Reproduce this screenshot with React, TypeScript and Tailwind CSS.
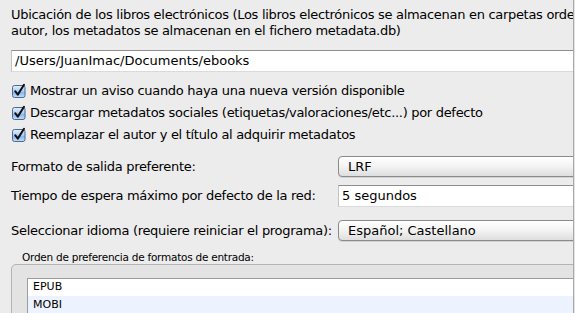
const font = { fontFamily: '"DejaVu Sans", "Liberation Sans", sans-serif' };

function CheckBox() {
  return (
    <svg width="16" height="16" viewBox="0 0 16 16" className="shrink-0">
      <defs>
        <linearGradient id="cbFill" x1="0" y1="0" x2="0" y2="1">
          <stop offset="0" stopColor="#e4effd" />
          <stop offset="0.5" stopColor="#a9cbf3" />
          <stop offset="0.55" stopColor="#86b4ec" />
          <stop offset="1" stopColor="#bfe0ff" />
        </linearGradient>
      </defs>
      <rect x="1.5" y="2.5" width="12.5" height="12" rx="2" fill="url(#cbFill)" stroke="#4f6890" />
      <path d="M4.2 8.2 L6.8 11.6 L13 1.8" fill="none" stroke="#111" strokeWidth="2" strokeLinecap="round" strokeLinejoin="round" />
    </svg>
  );
}

function CheckRow({ label }: { label: string }) {
  return (
    <div className="flex h-[22px] items-center gap-[3px] whitespace-nowrap tracking-[-0.3px]">
      <CheckBox />
      <span>{label}</span>
    </div>
  );
}

function PopUp({ value }: { value: string }) {
  return (
    <div className="flex h-[21px] w-[260px] shrink-0 items-center rounded-[4px] border border-[#8a8a8a] bg-gradient-to-b from-[#ffffff] via-[#f3f3f3] to-[#dedede] pl-[9px] shadow-[0_1px_0_#d4d4d4]">
      {value}
    </div>
  );
}

function FormRow({ label, children, className }: { label: string; children: React.ReactNode; className: string }) {
  return (
    <div className={`flex items-center whitespace-nowrap ${className}`}>
      <span className="w-[327px] shrink-0 tracking-[-0.3px]">{label}</span>
      {children}
    </div>
  );
}

export default function App() {
  return (
    <div className="flex h-[313px] w-[575px] overflow-hidden bg-[#ececec] text-[13px] text-black" style={font}>
      <div className="w-[573px] shrink-0 overflow-hidden pl-[11px] pt-[7px]">
        <p className="whitespace-nowrap leading-4 tracking-[-0.3px]">
          Ubicación de los libros electrónicos (Los libros electrónicos se almacenan en carpetas ordenadas por
          <br />
          autor, los metadatos se almacenan en el fichero metadata.db)
        </p>

        <div className="mt-[11px] flex h-[22px] w-[580px] items-center border border-t-[#8e8e8e] border-x-[#c2c2c2] border-b-[#dadada] bg-white pl-[3px]">
          /Users/JuanImac/Documents/ebooks
        </div>

        <div className="mt-[8px]">
          <CheckRow label="Mostrar un aviso cuando haya una nueva versión disponible" />
          <CheckRow label="Descargar metadatos sociales (etiquetas/valoraciones/etc...) por defecto" />
          <CheckRow label="Reemplazar el autor y el título al adquirir metadatos" />
        </div>

        <FormRow label="Formato de salida preferente:" className="mt-[10px]">
          <PopUp value="LRF" />
        </FormRow>

        <FormRow label="Tiempo de espera máximo por defecto de la red:" className="mt-[8px]">
          <div className="flex h-[22px] w-[260px] shrink-0 items-center border border-t-[#8e8e8e] border-x-[#c2c2c2] border-b-[#dadada] bg-white pl-[3px]">
            5 segundos
          </div>
        </FormRow>

        <FormRow label="Seleccionar idioma (requiere reiniciar el programa):" className="mt-[13px]">
          <PopUp value="Español; Castellano" />
        </FormRow>

        <div className="mt-[10px] pl-[11px] text-[10.5px] leading-[13px] tracking-[-0.25px]">
          Orden de preferencia de formatos de entrada:
        </div>

        <div className="h-[60px] w-[580px] rounded-t-[5px] border border-[#b4b4b4] bg-[#e3e3e3] pl-[15px] pt-[13px]">
          <div className="border-l border-t border-[#9c9c9c] bg-white text-[11px]">
            <div className="flex h-[17px] items-center pl-[5px]">EPUB</div>
            <div className="flex h-[18px] items-center bg-[#edf3fe] pl-[5px]">MOBI</div>
          </div>
        </div>
      </div>
      <div className="w-px shrink-0 bg-[#a8a8a8]" />
      <div className="flex-1 bg-[#e4e4e4]" />
    </div>
  );
}
